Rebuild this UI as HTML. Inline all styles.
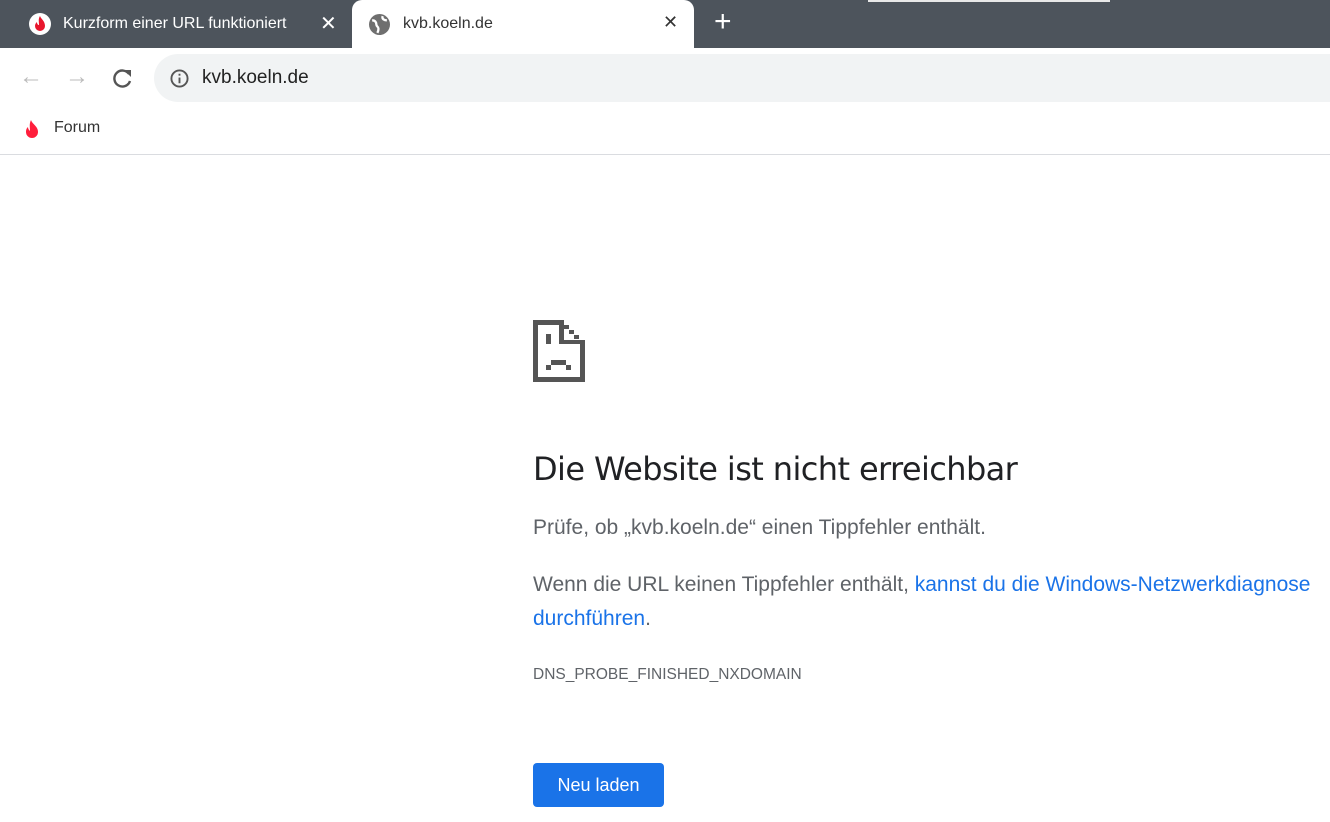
<!DOCTYPE html>
<html><head><meta charset="utf-8"><style>
body{margin:0;width:1330px;height:822px;overflow:hidden;background:#fff;font-family:"Liberation Sans",sans-serif;position:relative}
.abs{position:absolute}
</style></head><body>
<div class="abs" style="left:0;top:0;width:1330px;height:48px;background:#4d545c"></div>
<div class="abs" style="left:868px;top:0;width:242px;height:2px;background:#e8e8e8"></div>
<svg class="abs" style="left:29px;top:13px" width="22" height="22" viewBox="0 0 22 22"><circle cx="11" cy="11" r="11" fill="#fff"/><path d="M11 3c1 3 5 5 5 10a5 5 0 0 1-10 0c0-2 1-3 2-4 0 2 1 3 2 3 0-3-1-6 1-9z" fill="#e8162d"/></svg>
<div class="abs" style="left:63px;top:15px;font-size:16px;color:#fff;white-space:nowrap;width:240px;overflow:hidden">Kurzform einer URL funktioniert</div>
<div class="abs" style="left:320px;top:11px;font-size:20px;color:#fff">✕</div>
<div class="abs" style="left:352px;top:0;width:342px;height:48px;background:#fff;border-radius:10px 10px 0 0"></div>
<svg class="abs" style="left:369px;top:14px" width="21" height="21" viewBox="0 0 20 20"><circle cx="10" cy="10" r="10" fill="#6f6f6f"/><path d="M3 6c3 0 4 2 4 4s2 2 2 4-1 4-1 4M13 2c-1 3 2 4 4 4" stroke="#fff" stroke-width="2.2" fill="none"/></svg>
<div class="abs" style="left:403px;top:15px;font-size:16px;color:#333">kvb.koeln.de</div>
<div class="abs" style="left:663px;top:12px;font-size:18px;color:#333">✕</div>
<div class="abs" style="left:714px;top:7px;font-size:30px;color:#fff;line-height:30px">+</div>
<div class="abs" style="left:19px;top:65px;font-size:24px;color:#bbb;line-height:24px">←</div>
<div class="abs" style="left:65px;top:65px;font-size:24px;color:#bbb;line-height:24px">→</div>
<svg class="abs" style="left:112px;top:67px" width="22" height="22" viewBox="0 0 22 22"><path d="M17 7A8 8 0 1 0 18 14" stroke="#555" stroke-width="2.4" fill="none"/><path d="M12 3h7v7z" fill="#555"/></svg>
<div class="abs" style="left:154px;top:54px;width:1200px;height:48px;background:#f1f3f4;border-radius:24px"></div>
<svg class="abs" style="left:170px;top:69px" width="19" height="19" viewBox="0 0 20 20"><circle cx="10" cy="10" r="8.5" stroke="#555" stroke-width="2" fill="none"/><rect x="9" y="9" width="2" height="6" fill="#555"/><rect x="9" y="5" width="2" height="2" fill="#555"/></svg>
<div class="abs" style="left:202px;top:67px;font-size:19px;color:#222">kvb.koeln.de</div>
<svg class="abs" style="left:22px;top:119px" width="20" height="20" viewBox="0 0 20 20"><path d="M9 1c1 4 7 6 7 12a6 6 0 0 1-12 0c0-3 1-4 2-5 0 2 1 3 2 4 0-4-1-7 1-11z" fill="#ff1e3c"/></svg>
<div class="abs" style="left:54px;top:119px;font-size:16px;color:#333">Forum</div>
<div class="abs" style="left:0;top:154px;width:1330px;height:1px;background:#dadce0"></div>
<svg class="abs" style="left:533px;top:320px" width="52" height="62" viewBox="0 0 52 62" shape-rendering="crispEdges" fill="#555">
<rect x="0" y="0" width="5" height="62"/><rect x="0" y="57" width="52" height="5"/><rect x="0" y="0" width="31" height="5"/>
<rect x="26" y="0" width="5" height="24"/><rect x="26" y="20" width="26" height="4"/><rect x="47" y="20" width="5" height="42"/>
<rect x="31" y="5" width="5" height="4"/><rect x="36" y="10" width="5" height="4"/><rect x="41" y="15" width="5" height="4"/>
<rect x="13" y="14" width="5" height="10"/>
<rect x="18" y="40" width="15" height="5"/><rect x="13" y="45" width="5" height="5"/><rect x="33" y="45" width="5" height="5"/>
</svg>
<div class="abs" style="left:533px;top:450px;font-size:32px;color:#202124;font-family:'DejaVu Sans','Liberation Sans',sans-serif;font-weight:500;letter-spacing:-0.6px">Die Website ist nicht erreichbar</div>
<div class="abs" style="left:533px;top:516px;font-size:21px;color:#5f6368;white-space:nowrap">Prüfe, ob „kvb.koeln.de“ einen Tippfehler enthält.</div>
<div class="abs" style="left:533px;top:568px;width:810px;font-size:21px;line-height:34px;color:#5f6368">Wenn die URL keinen Tippfehler enthält, <span style="color:#1a73e8">kannst du die Windows-Netzwerkdiagnose durchführen</span>.</div>
<div class="abs" style="left:533px;top:666px;font-size:15.5px;color:#5f6368">DNS_PROBE_FINISHED_NXDOMAIN</div>
<div class="abs" style="left:533px;top:763px;width:131px;height:44px;background:#1a73e8;border-radius:4px;color:#fff;font-size:18px;line-height:44px;text-align:center">Neu laden</div>
</body></html>
